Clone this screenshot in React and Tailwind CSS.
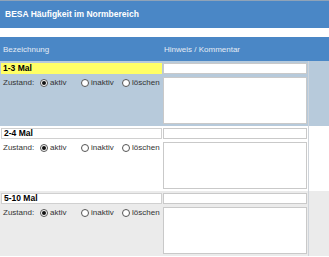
import React from "react"

const Radio = ({ checked, label, className }) => (
    <div className={"flex items-center " + className}>
        <span className="w-[8px] h-[8px] rounded-full border border-[#555] bg-white flex items-center justify-center">
            {checked ? <span className="w-[4px] h-[4px] rounded-full bg-[#111]"></span> : null}
        </span>
        <span className="ml-[2px]">{label}</span>
    </div>
)

const Row = ({ label, bg, nameClass }) => (
    <div className={"flex h-[65px] " + bg}>
        <div className="w-[162px] pl-[1px] pt-[2px]">
            <div className={"h-[11px] flex items-center pl-[2px] text-[8.5px] font-bold text-black " + nameClass}>{label}</div>
            <div className="flex items-center h-[17px] pt-[1px] text-[8px] text-[#333]">
                <span className="w-[39px] pl-[2px]">Zustand:</span>
                <Radio checked label="aktiv" className="w-[41px]" />
                <Radio label="inaktiv" className="w-[41px]" />
                <Radio label="löschen" />
            </div>
        </div>
        <div className="w-[146px] pl-[1px] pt-[2px] flex flex-col gap-[3px]">
            <div className="h-[11px] w-[144px] bg-white border border-[#c9c9c9]"></div>
            <div className="h-[47px] w-[144px] bg-white border border-[#c9c9c9]"></div>
        </div>
        <div className="flex-1 border-l border-[#cfd4da]"></div>
    </div>
)

const App = () => {
    return (
        <div className="w-[329px] h-[257px] bg-white overflow-hidden font-['Liberation_Sans',Arial,sans-serif]">
            <div className="h-[28px] bg-[#4a87c6] border-t border-[#8fa3b8] flex items-center pl-[5px]">
                <span className="text-white font-bold text-[8.5px]">BESA Häufigkeit im Normbereich</span>
            </div>
            <div className="h-[9px]"></div>
            <div className="h-[24px] bg-[#4a87c6] flex items-center pt-[2px] text-[8px] text-[#e3ebf4]">
                <span className="w-[164px] pl-[3px]">Bezeichnung</span>
                <span>Hinweis / Kommentar</span>
            </div>
            <Row label="1-3 Mal" bg="bg-[#b7cadb]" nameClass="bg-[#ffff66]" />
            <Row label="2-4 Mal" bg="bg-white" nameClass="bg-white border border-[#d0d0d0]" />
            <Row label="5-10 Mal" bg="bg-[#ebebeb]" nameClass="bg-white border border-[#d0d0d0]" />
        </div>
    )
}

export default App
